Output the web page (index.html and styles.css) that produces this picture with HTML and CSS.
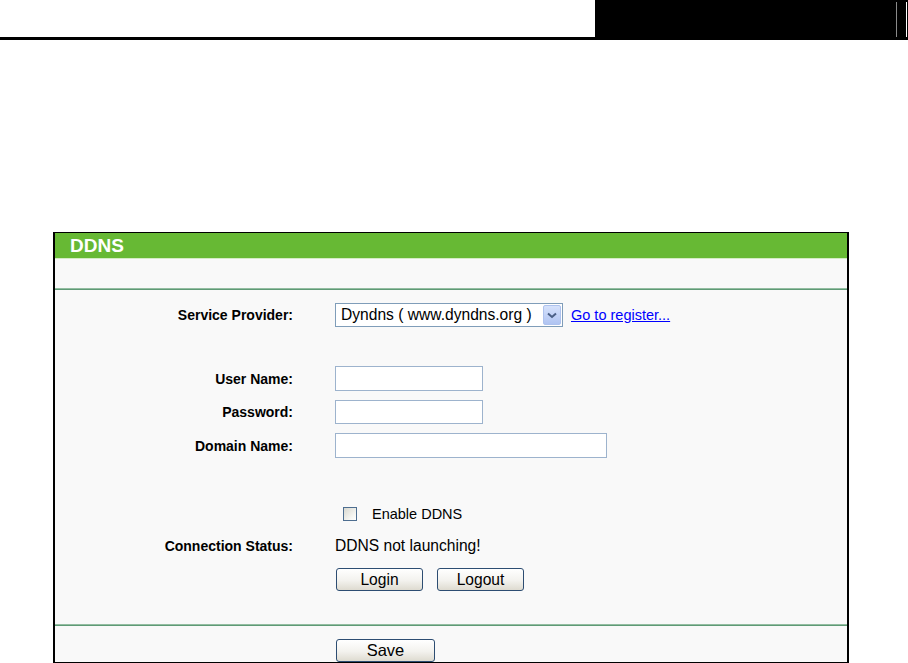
FILE: index.html
```html
<!DOCTYPE html>
<html lang="en">
<head>
<meta charset="utf-8">
<title>DDNS</title>
<link rel="stylesheet" href="styles.css">
</head>
<body>
<header class="topbar">
  <div class="topbar-fill"></div>
  <div class="topbar-block">
    <span class="vline vline-grey"></span>
    <span class="vline vline-white"></span>
  </div>
</header>

<section class="panel">
  <h1 class="panel-title">DDNS</h1>
  <div class="panel-spacer"></div>
  <div class="divider"></div>

  <div class="form">
    <div class="row row-select">
      <label class="label">Service Provider:</label>
      <div class="field">
        <div class="select">
          <span class="select-text">Dyndns ( www.dyndns.org )</span>
          <span class="select-btn">
            <svg width="10" height="7" viewBox="0 0 10 7"><path d="M1 1.5 L5 5 L9 1.5" fill="none" stroke="#4a5f86" stroke-width="2"/></svg>
          </span>
        </div>
        <a class="link" href="#">Go to register...</a>
      </div>
    </div>

    <div class="row row-input gap-lg">
      <label class="label">User Name:</label>
      <div class="field"><input class="text-input" type="text"></div>
    </div>
    <div class="row row-input-s gap-sm">
      <label class="label">Password:</label>
      <div class="field"><input class="text-input" type="password"></div>
    </div>
    <div class="row row-input gap-sm">
      <label class="label">Domain Name:</label>
      <div class="field"><input class="text-input wide" type="text"></div>
    </div>

    <div class="row row-std gap-xl">
      <span class="label"></span>
      <div class="field">
        <input class="check" type="checkbox">
        <span class="check-label">Enable DDNS</span>
      </div>
    </div>

    <div class="row row-std gap-xs">
      <span class="label">Connection Status:</span>
      <div class="field"><span class="value">DDNS not launching!</span></div>
    </div>

    <div class="row row-btn gap-md">
      <span class="label"></span>
      <div class="field buttons">
        <button class="btn">Login</button>
        <button class="btn">Logout</button>
      </div>
    </div>
  </div>

  <div class="divider"></div>

  <div class="save-row">
    <span class="label"></span>
    <div class="field"><button class="btn btn-save">Save</button></div>
  </div>
</section>
</body>
</html>
```

FILE: styles.css
```css
html, body {
  margin: 0;
  padding: 0;
  background: #ffffff;
  overflow: hidden;
  height: 663px;
}

body {
  font-family: "Liberation Sans", Arial, sans-serif;
  font-size: 14.5px;
  color: #000;
}

.topbar {
  display: flex;
  height: 37px;
  border-bottom: 3px solid #000;
}

.topbar-fill {
  flex: 0 0 595px;
}

.topbar-block {
  flex: 1;
  background: #000;
  display: flex;
  justify-content: flex-end;
  align-items: center;
  gap: 9px;
  padding-right: 1px;
}

.vline {
  width: 1px;
  height: 35px;
  margin-top: 1px;
}

.vline-grey { background: #8a8a8a; }
.vline-white { background: #ffffff; }

.panel {
  margin: 192px 0 0 53px;
  width: 796px;
  box-sizing: border-box;
  border-top: 1px solid #000;
  border-left: 2px solid #000;
  border-right: 2px solid #000;
  border-bottom: 1px solid #000;
  background: #f9f9f9;
}

.panel-title {
  margin: 0;
  height: 25px;
  line-height: 26px;
  padding-left: 15px;
  background: #67b934;
  color: #fff;
  font-size: 19px;
  font-weight: bold;
  border-bottom: 1px solid #d4ecc4;
}

.panel-spacer {
  height: 29px;
}

.divider {
  height: 1px;
  background: #5f9a76;
  border-top: 1px solid #93bda1;
}

.form {
  display: flex;
  flex-direction: column;
  padding: 13px 0 33px;
}

.row {
  display: grid;
  grid-template-columns: 238px auto;
  column-gap: 42px;
  align-items: center;
}

.row-select { height: 24px; }
.row-input { height: 25px; }
.row-input-s { height: 24px; }
.row-std { height: 24px; }
.row-btn { height: 23px; }

.gap-lg { margin-top: 39px; }
.gap-sm { margin-top: 9px; }
.gap-xl { margin-top: 44px; }
.gap-xs { margin-top: 8px; }
.gap-md { margin-top: 10px; }

.label {
  text-align: right;
  font-weight: bold;
  font-size: 14px;
}

.field {
  display: flex;
  align-items: center;
  height: 100%;
}

.select {
  box-sizing: border-box;
  width: 228px;
  height: 24px;
  border: 1px solid #7f9db9;
  background: #fff;
  display: flex;
  align-items: center;
  justify-content: space-between;
  padding: 1px;
}

.select-text {
  padding-left: 4px;
  white-space: nowrap;
  font-size: 15.6px;
}

.select-btn {
  box-sizing: border-box;
  width: 18px;
  height: 20px;
  border: 1px solid #aec2ee;
  border-radius: 2px;
  background: linear-gradient(#d6e2fc, #b0c4f2);
  display: flex;
  align-items: center;
  justify-content: center;
}

.link {
  margin-left: 8px;
  color: #0000ff;
  text-decoration: underline;
  white-space: nowrap;
}

.text-input {
  box-sizing: border-box;
  width: 148px;
  height: 100%;
  margin: 0;
  border: 1px solid #9db3cd;
  background: #fff;
  font: inherit;
}

.text-input.wide {
  width: 272px;
}

.check {
  appearance: none;
  -webkit-appearance: none;
  box-sizing: border-box;
  width: 14px;
  height: 14px;
  margin: 0 0 0 8px;
  border: 1px solid #4e6e90;
  background: linear-gradient(135deg, #d8d8d0, #f6f6f2 70%, #ffffff);
}

.check-label {
  margin-left: 15px;
}

.value {
  font-size: 15.6px;
}

.buttons {
  gap: 14px;
}

.btn {
  box-sizing: border-box;
  width: 87px;
  height: 23px;
  margin: 0 0 0 1px;
  padding: 0;
  border: 1px solid #2d4d72;
  border-radius: 3px;
  background: linear-gradient(#ffffff, #f3f2ee 55%, #dedbd0);
  font-family: inherit;
  font-size: 15.6px;
  color: #000;
}

.buttons .btn + .btn {
  margin-left: 0;
}

.save-row {
  display: grid;
  grid-template-columns: 238px auto;
  column-gap: 42px;
  padding-top: 12px;
  height: 24px;
}

.btn-save {
  width: 99px;
  font-size: 16.5px;
}
```
